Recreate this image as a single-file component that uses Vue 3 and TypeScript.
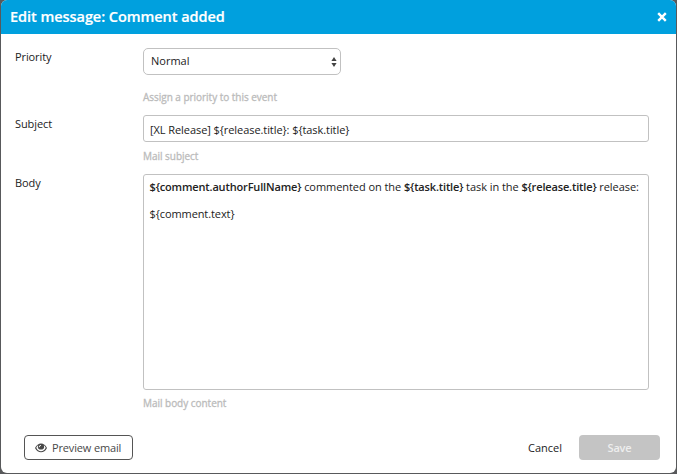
<script setup lang="ts">
import { ref } from 'vue'

const subject = ref('[XL Release] ${release.title}: ${task.title}')
const names = {
  author: '${comment.authorFullName}',
  task: '${task.title}',
  release: '${release.title}',
  text: '${comment.text}',
}
</script>

<template>
  <div class="backdrop">
    <section class="dialog" role="dialog">
      <header class="header">
        <h1 class="title">Edit message: Comment added</h1>
        <button class="close" aria-label="Close">
          <svg width="10" height="10" viewBox="0 0 10 10"><path d="M1.2 1.2 8.8 8.8M8.8 1.2 1.2 8.8" stroke="#fff" stroke-width="2.4" /></svg>
        </button>
      </header>
      <div class="form">
        <div class="row priority">
          <label class="label">Priority</label>
          <div class="field">
            <div class="select">
              <span>Normal</span>
              <svg width="6" height="10" viewBox="0 0 6 10"><path d="M3 0 5.6 4H.4ZM3 10 .4 6h5.2Z" fill="#444" /></svg>
            </div>
            <p class="hint">Assign a priority to this event</p>
          </div>
        </div>
        <div class="row subject">
          <label class="label">Subject</label>
          <div class="field">
            <div class="input">{{ subject }}</div>
            <p class="hint">Mail subject</p>
          </div>
        </div>
        <div class="row body">
          <label class="label">Body</label>
          <div class="field">
            <div class="editor">
              <p><b>{{ names.author }}</b> commented on the <b>{{ names.task }}</b> task in the <b>{{ names.release }}</b> release:</p>
              <p>{{ names.text }}</p>
            </div>
            <p class="hint">Mail body content</p>
          </div>
        </div>
      </div>
      <footer class="footer">
        <button class="preview">
          <svg width="12" height="10" viewBox="0 0 12 10">
            <path d="M0 5C1.500 2 3.500 .5 6 .5S10.500 2 12 5C10.500 8 8.500 9.300 6 9.300S1.500 8 0 5Z" fill="#484848" />
            <path d="M1.300 4.800C1.700 3.500 2.300 2.700 3.200 2.200C2.500 4 2.700 6.600 6 6.600S9.500 4 8.800 2.200C9.700 2.700 10.300 3.500 10.700 4.800C9.800 7 8 8.200 6 8.200S2.200 7 1.300 4.800Z" fill="#fff" />
            <path d="M4.200 4.200A1.800 1.800 0 0 1 6 2.400" fill="none" stroke="#fff" stroke-width=".9" />
          </svg>
          <span>Preview email</span>
        </button>
        <div class="actions">
          <button class="cancel">Cancel</button>
          <button class="save" disabled>Save</button>
        </div>
      </footer>
    </section>
  </div>
</template>

<style>
body { margin: 0; overflow: hidden; }
</style>

<style scoped>
* { box-sizing: border-box; }
.backdrop {
  width: 677px;
  height: 474px;
  padding: 0 1px 1px;
  background: #58595b;
  font-family: 'Open Sans', sans-serif;
  font-size: 11px;
  letter-spacing: -.07px;
  color: #222;
}
.dialog {
  height: 473px;
  display: flex;
  flex-direction: column;
  background: #fff;
  border-radius: 6px;
  overflow: hidden;
}
.header {
  height: 34px;
  flex: none;
  display: flex;
  align-items: center;
  justify-content: space-between;
  padding: 0 9px;
  background: #00a0de;
  color: #fff;
}
.title { margin: 0; font-size: 14.5px; font-weight: 600; line-height: 34px; letter-spacing: -.05px; -webkit-text-stroke: .2px #fff; }
button { font: inherit; letter-spacing: inherit; color: inherit; margin: 0; padding: 0; border: 0; background: none; }
.close { display: flex; }
p { margin: 0; }
.form { padding: 14px 27px 0 14px; flex: 1; }
.row { display: flex; }
.priority { height: 67px; }
.subject { height: 59px; }
.label { width: 128px; flex: none; line-height: 18px; letter-spacing: -.1px; }
.field { flex: 1; min-width: 0; }
.hint { color: #bbb; font-size: 10px; line-height: 14px; letter-spacing: -.03px; -webkit-text-stroke: .3px #bbb; }
.select {
  width: 198px;
  height: 27px;
  display: flex;
  align-items: center;
  justify-content: space-between;
  padding: 0 3px 0 7px;
  border: 1px solid #c1c1c1;
  border-radius: 5px;
}
.select span { padding-bottom: 2px; letter-spacing: 0; }
.priority .hint { margin-top: 15px; }
.input {
  height: 27px;
  padding: 1px 6px 0;
  line-height: 25px;
  border: 1px solid #c1c1c1;
  border-radius: 3px;
}
.subject .hint { margin-top: 7px; }
.body .hint { margin-top: 6px; }
.editor {
  height: 216px;
  padding: 5px 5.5px;
  border: 1px solid #c1c1c1;
  border-radius: 3px;
  line-height: 14px;
  white-space: nowrap;
  letter-spacing: -.06px;
}
.editor p + p { margin-top: 13px; letter-spacing: -.09px; }
.editor b { font-weight: 600; letter-spacing: -.15px; }
.footer {
  height: 38px;
  flex: none;
  display: flex;
  align-items: flex-start;
  justify-content: space-between;
  padding: 0 16px 0 23px;
}
.preview {
  width: 109px;
  height: 25px;
  display: flex;
  align-items: center;
  gap: 5px;
  padding-left: 10px;
  border: 1px solid #555;
  border-radius: 4px;
  color: #484848;
}
.preview span { letter-spacing: -.15px; }
.actions { display: flex; gap: 17px; }
.cancel { letter-spacing: 0; }
.save {
  width: 81px;
  height: 25px;
  border-radius: 4px;
  background: #c4c4c4;
  color: #eee;
  font-weight: 600;
  letter-spacing: -.2px;
}
</style>
